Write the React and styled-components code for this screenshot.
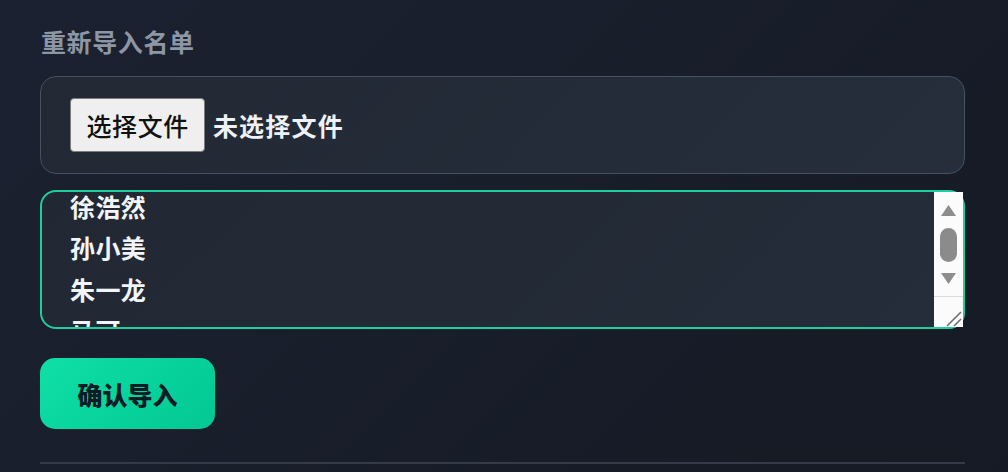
import React, { useEffect, useRef } from "react";
import styled, { createGlobalStyle } from "styled-components";

const GlobalStyle = createGlobalStyle`
  html, body {
    margin: 0;
    padding: 0;
    height: 472px;
    overflow: hidden;
    background: linear-gradient(135deg, #1b2130 0%, #181e2a 50%, #151a24 100%);
    font-family: "Noto Sans", "Noto Sans CJK SC", sans-serif;
  }
`;

const Page = styled.div`
  display: flex;
  flex-direction: column;
  padding: 24px 43px 0 40px;
`;

const Heading = styled.h2`
  margin: 0 0 16px;
  padding-left: 1px;
  font-size: 25px;
  line-height: 36px;
  font-weight: 700;
  letter-spacing: 0.6px;
  color: #8d96a4;
`;

const FileBox = styled.div`
  box-sizing: border-box;
  height: 98px;
  display: flex;
  align-items: center;
  padding: 0 28.5px;
  border: 1.5px solid #465061;
  border-radius: 16px;
  background: linear-gradient(135deg, #222935 0%, #262e3b 100%);
`;

const FilePicker = styled.label`
  display: flex;
  align-items: center;
  gap: 8px;
  cursor: pointer;
`;

const HiddenInput = styled.input`
  display: none;
`;

const PickButton = styled.span`
  box-sizing: border-box;
  display: inline-flex;
  align-items: center;
  height: 54px;
  padding: 0 15px 0 16px;
  background: #efefef;
  border: 1.5px solid #7c7c7c;
  border-radius: 4px;
  color: #111;
  font-size: 25px;
  font-weight: 500;
  letter-spacing: 0.6px;
`;

const FileStatus = styled.span`
  color: #eef1f5;
  font-size: 25px;
  font-weight: 600;
  letter-spacing: 1.2px;
`;

const AreaWrap = styled.div`
  position: relative;
  margin-top: 16px;
`;

const NameArea = styled.textarea`
  display: block;
  box-sizing: border-box;
  margin: 0;
  width: 100%;
  height: 139px;
  padding: 16px 60px 16px 28px;
  border: 2px solid #1ccf9c;
  border-radius: 16px;
  background: linear-gradient(135deg, #212833 0%, #252d3a 100%);
  color: #f1f4f8;
  font-family: "Noto Sans", "Noto Sans CJK SC", sans-serif;
  font-size: 25px;
  font-weight: 600;
  line-height: 41.5px;
  letter-spacing: 0.4px;
  outline: none;
  resize: none;
  scrollbar-width: none;
`;

const ScrollBar = styled.div`
  position: absolute;
  top: 2px;
  right: 2px;
  bottom: 2px;
  width: 29px;
  display: flex;
  flex-direction: column;
  background: #fbfbfb;
  pointer-events: none;
`;

const ArrowButton = styled.div`
  height: 30px;
  display: flex;
  justify-content: center;
  align-items: ${(p) => (p.$down ? "flex-start" : "flex-end")};
  padding: ${(p) => (p.$down ? "7px 0 0" : "0 0 6px")};
  box-sizing: border-box;
`;

const Track = styled.div`
  flex: 1;
  display: flex;
  justify-content: center;
  padding-top: 6px;
`;

const Thumb = styled.div`
  width: 17px;
  height: 34px;
  border-radius: 9px;
  background: #8b8b8b;
`;

const Resizer = styled.div`
  height: 30px;
  border-top: 1px solid #dcdcdc;
  display: flex;
  justify-content: flex-end;
  align-items: flex-end;
`;

const ConfirmButton = styled.button`
  margin-top: 29px;
  align-self: flex-start;
  width: 175px;
  height: 71px;
  border: none;
  border-radius: 15px;
  background: linear-gradient(135deg, #0fdfa6 0%, #02c894 100%);
  color: #0d1b26;
  font-family: "Noto Sans", "Noto Sans CJK SC", sans-serif;
  font-size: 25px;
  font-weight: 800;
  cursor: pointer;
`;

const Divider = styled.div`
  margin-top: 33px;
  border-top: 2px solid #343a47;
`;

const names = [
  "张伟",
  "李娜",
  "王芳",
  "刘洋",
  "陈静",
  "徐浩然",
  "孙小美",
  "朱一龙",
  "马可",
  "赵丽颖",
  "周杰",
  "吴磊",
  "郑爽",
];

export default function App() {
  const areaRef = useRef(null);

  useEffect(() => {
    const el = areaRef.current;
    if (el) {
      el.scrollTop = 16 + 5 * 41.5 + 5.75;
    }
  }, []);

  return (
    <>
      <GlobalStyle />
      <Page>
        <Heading>重新导入名单</Heading>
        <FileBox>
          <FilePicker>
            <HiddenInput type="file" />
            <PickButton>选择文件</PickButton>
            <FileStatus>未选择文件</FileStatus>
          </FilePicker>
        </FileBox>
        <AreaWrap>
          <NameArea ref={areaRef} defaultValue={names.join("\n")} />
          <ScrollBar>
            <ArrowButton>
              <svg width="15" height="11" viewBox="0 0 15 11">
                <path d="M7.5 0 L15 11 L0 11 Z" fill="#8d8d8d" />
              </svg>
            </ArrowButton>
            <Track>
              <Thumb />
            </Track>
            <ArrowButton $down>
              <svg width="15" height="11" viewBox="0 0 15 11">
                <path d="M0 0 L15 0 L7.5 11 Z" fill="#8d8d8d" />
              </svg>
            </ArrowButton>
            <Resizer>
              <svg width="18" height="18" viewBox="0 0 18 18">
                <path d="M2 17 L16 3 M9 17 L16 10" stroke="#6a6a6a" strokeWidth="1.5" />
              </svg>
            </Resizer>
          </ScrollBar>
        </AreaWrap>
        <ConfirmButton>确认导入</ConfirmButton>
        <Divider />
      </Page>
    </>
  );
}
